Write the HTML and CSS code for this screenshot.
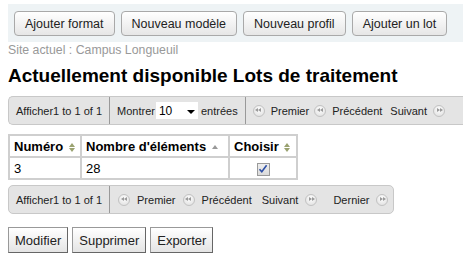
FILE: index.html
```html
<!DOCTYPE html>
<html lang="fr">
<head>
    <meta charset="UTF-8">
    <title>Lots de traitement</title>
    <link rel="stylesheet" href="styles.css">
</head>
<body>

    <div class="toolbar">
        <button class="tb-btn">Ajouter format</button>
        <button class="tb-btn">Nouveau modèle</button>
        <button class="tb-btn">Nouveau profil</button>
        <button class="tb-btn">Ajouter un lot</button>
    </div>

    <div class="site">Site actuel : Campus Longueuil</div>
    <h1>Actuellement disponible Lots de traitement</h1>

    <!-- pager du haut (dépasse à droite) -->
    <div class="pager pager-top">
        <div class="seg">Afficher1 to 1 of 1</div>
        <div class="seg">
            Montrer<span class="select">10 <span class="caret"></span></span>entrées
        </div>
        <div class="seg nav">
            <span class="nav-item"><span class="ico prev"></span>Premier</span>
            <span class="nav-item"><span class="ico prev"></span>Précédent</span>
            <span class="nav-item next-item">Suivant<span class="ico next"></span></span>
        </div>
    </div>

    <table class="lots">
        <thead>
            <tr>
                <th class="c-num">Numéro <span class="sort both"></span></th>
                <th class="c-nb">Nombre d'éléments <span class="sort asc"></span></th>
                <th class="c-ch">Choisir <span class="sort both"></span></th>
            </tr>
        </thead>
        <tbody>
            <tr>
                <td>3</td>
                <td>28</td>
                <td class="center"><span class="check"><svg width="10" height="10" viewBox="0 0 10 10"><path d="M1.5 5.2 L3.8 7.8 L8.6 1.2" fill="none" stroke="#2d4fa6" stroke-width="1.6"/></svg></span></td>
            </tr>
        </tbody>
    </table>

    <!-- pager du bas -->
    <div class="pager pager-bottom">
        <div class="seg">Afficher1 to 1 of 1</div>
        <div class="seg nav">
            <span class="nav-item"><span class="ico prev"></span>Premier</span>
            <span class="nav-item"><span class="ico prev"></span>Précédent</span>
            <span class="nav-item next-item">Suivant<span class="ico next"></span></span>
            <span class="nav-item last">Dernier<span class="ico next"></span></span>
        </div>
    </div>

    <div class="actions">
        <button class="act-btn">Modifier</button>
        <button class="act-btn">Supprimer</button>
        <button class="act-btn">Exporter</button>
    </div>

</body>
</html>
```

FILE: styles.css
```css
body {
    font-family: "Liberation Sans", Arial, sans-serif;
    font-size: 12px;
    margin: 0;
    padding: 4px 0 0 8px;
    color: #000;
    background: #fff;
    overflow: hidden;
    white-space: nowrap;
}
.toolbar {
    background-color: #eef3f5;
    padding: 7px 6px 6px 6px;
    display: flex;
    gap: 6px;
}
.tb-btn {
    flex-shrink: 0;
    font-family: inherit;
    font-size: 12.5px;
    height: 25px;
    padding: 0 10px;
    border: 1px solid #a9a9a9;
    border-radius: 4px;
    background: linear-gradient(#ffffff, #e6e6e6);
    color: #222;
    white-space: nowrap;
}
.site {
    color: #999;
    font-size: 12.3px;
    margin-top: 1px;
}
h1 {
    font-size: 19px;
    font-weight: bold;
    margin: 8px 0 9px 0;
}
.pager {
    display: flex;
    align-items: center;
    height: 27px;
    border: 1px solid #c8c8c8;
    border-radius: 5px;
    background: #e4e4e4;
    color: #222;
    font-size: 11px;
}
.pager-top {
    width: 480px;
    border-right: none;
}
.pager-bottom {
    display: inline-flex;
    margin-top: 5px;
}
.seg {
    flex-shrink: 0;
    display: flex;
    align-items: center;
    height: 100%;
    padding: 0 7px;
    border-left: 1px solid #999;
}
.seg:first-child {
    border-left: none;
}
.select {
    display: inline-flex;
    align-items: center;
    justify-content: space-between;
    width: 36px;
    height: 17px;
    background: #fff;
    margin: 0 3px 0 1px;
    padding: 0 3px;
    color: #000;
    font-size: 12px;
}
.caret {
    width: 0;
    height: 0;
    border-left: 4px solid transparent;
    border-right: 4px solid transparent;
    border-top: 4px solid #000;
    margin-top: 3px;
}
.nav {
    gap: 7px;
    padding-left: 8px;
}
.pager-top .nav {
    gap: 5px;
    padding-left: 7px;
}
.nav-item {
    display: flex;
    align-items: center;
    gap: 7px;
}
.pager-top .nav-item {
    gap: 6px;
}
.nav-item.next-item {
    margin-left: 3px;
}
.pager-bottom {
    padding-right: 0;
}
.pager-bottom .nav {
    padding-right: 5px;
}
.nav-item.last {
    margin-left: 9px;
}
.ico {
    display: inline-block;
    width: 10px;
    height: 10px;
    border-radius: 50%;
    border: 1px solid #c2c2c2;
    background: radial-gradient(circle at 50% 35%, #ffffff, #dcdcdc);
    position: relative;
}
.ico::before,
.ico::after {
    content: "";
    position: absolute;
    top: 2.5px;
    width: 0;
    height: 0;
    border-top: 2.5px solid transparent;
    border-bottom: 2.5px solid transparent;
}
.ico.prev::before { left: 1.5px; border-right: 3px solid #9a9a9a; }
.ico.prev::after { left: 4.5px; border-right: 3px solid #9a9a9a; }
.ico.next::before { left: 2.5px; border-left: 3px solid #9a9a9a; }
.ico.next::after { left: 5.5px; border-left: 3px solid #9a9a9a; }

.lots {
    border-collapse: collapse;
    margin-top: 9px;
    font-size: 13px;
}
.lots th,
.lots td {
    border: 2px solid #cfcfcf;
    padding: 1px 4px;
    height: 18px;
    text-align: left;
}
.lots th {
    font-weight: bold;
}
.c-num { width: 62px; }
.c-nb { width: 138px; }
.c-ch { width: 58px; }
.center {
    text-align: center !important;
}
.sort {
    display: inline-block;
    width: 7px;
    height: 9px;
    position: relative;
    vertical-align: middle;
    margin-left: 2px;
}
.sort.both::before,
.sort.both::after,
.sort.asc::before {
    content: "";
    position: absolute;
    left: 0;
    width: 0;
    height: 0;
    border-left: 3.5px solid transparent;
    border-right: 3.5px solid transparent;
}
.sort.both::before { top: 0; border-bottom: 4px solid #9aa270; }
.sort.both::after { top: 5px; border-top: 4px solid #9aa270; }
.sort.asc::before { top: 2px; border-bottom: 4px solid #999; }
.check {
    display: inline-flex;
    align-items: center;
    justify-content: center;
    width: 11px;
    height: 11px;
    border: 1px solid #9a9a9a;
    background: linear-gradient(#eeeeee, #dadada);
    vertical-align: middle;
}
.actions {
    display: flex;
    gap: 4px;
    margin-top: 13px;
}
.act-btn {
    font-family: inherit;
    font-size: 13px;
    height: 26px;
    padding: 0 6px;
    border: 1px solid #999;
    border-right-color: #666;
    border-bottom-color: #666;
    border-radius: 0;
    background: linear-gradient(#ffffff, #e4e4e4);
    color: #222;
}
```
